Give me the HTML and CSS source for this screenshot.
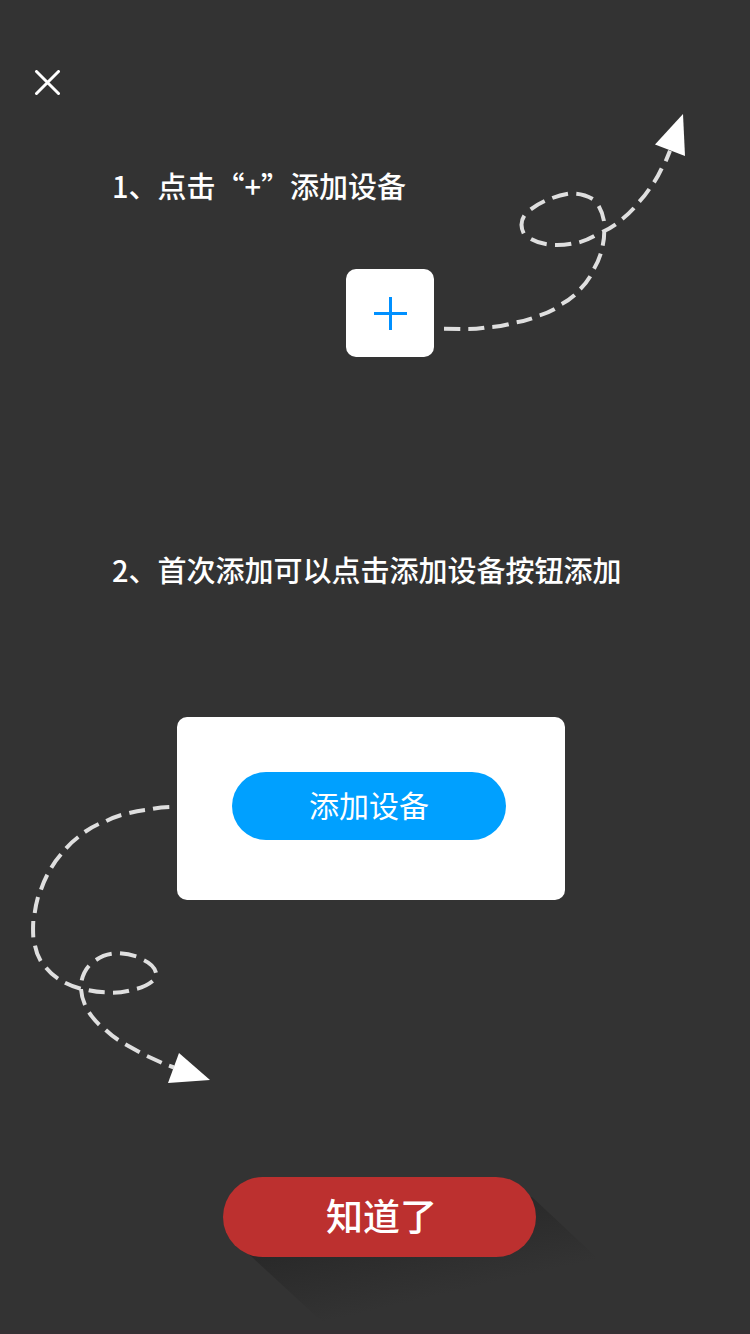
FILE: index.html
```html
<!DOCTYPE html>
<html lang="zh-CN">
<head>
<meta charset="utf-8">
<meta name="viewport" content="width=device-width, initial-scale=1">
<title>添加设备</title>
<link rel="stylesheet" href="styles.css">
</head>
<body>
<header class="top">
  <button class="close" type="button" aria-label="关闭">
    <svg class="close-icon" viewBox="0 0 26 26" aria-hidden="true"><path d="M2.500 1.500 24.500 23.500M24.500 1.500 2.500 23.500"/></svg>
  </button>
</header>
<main class="guide">
  <section class="step-one">
    <h2 class="title">1、点击“+”添加设备</h2>
    <button class="plus" type="button" aria-label="添加">
      <svg class="plus-icon" viewBox="0 0 33 33" aria-hidden="true"><path d="M0 16.5H33M16.5 0V33"/></svg>
    </button>
    <svg class="arrow-up" viewBox="0 0 242 218" aria-hidden="true">
      <path class="trail" d="M0 215.7L16.3 216M24.3 216Q32.3 216 40.3 214.7M48.3 214Q56.7 213.3 64.7 211.3M72.7 209.3Q80.5 207.9 88 205.3M95.7 202.3Q103.6 200 110.7 196M117.7 191Q124.8 187.3 130.7 182M136.3 176Q142.2 170.3 146.3 163.3M150 155.7Q154.3 148.6 156.7 140.7M158.7 132.7Q160.3 125.3 160.3 117.7M160 108Q158.5 99.5 154.7 93M148.7 86Q141 81.5 132.3 80.7M124 80.7Q116 82 108.3 85M100.7 88Q93.2 91.4 86.7 96.3M80.3 102.7Q75 111 79.7 120.3M87 126Q94 130 102.7 131.3M111 132Q119.2 132.2 127.3 130.7M135.3 129.3Q143.2 127 150.3 123M158.3 119Q165.4 115.8 171.7 111.3M178.3 106Q184.6 101 190 95M195.3 88.7Q200.8 82.8 205.3 76M210 69.3Q214.3 62.6 217.7 55.3M221.7 48.3L226 37.7"/>
      <path class="head" d="M239 1 211 31.5 241 43Z"/>
    </svg>
  </section>
  <section class="step-two">
    <h2 class="title title-two">2、首次添加可以点击添加设备按钮添加</h2>
    <div class="demo">
      <div class="card"><button class="add" type="button">添加设备</button></div>
      <svg class="arrow-down" viewBox="0 0 179 278" aria-hidden="true">
        <path class="trail" d="M138.3 2Q130 2.3 122 3.7M114 5Q106 6 98.3 8M90.3 10Q82.5 12.3 75.3 16M67.7 19Q60.3 22.3 53.7 27M47.3 32Q40.7 37 35 43.3M30 49.3Q24.6 55.5 20.3 62.7M16.3 69.7Q12.5 76.9 10 84.7M7 92Q4.8 99.8 3.7 108M2.3 116Q1.8 124 2.3 132.3M4 140.7Q5.5 149 9.7 156M15 162.7Q20.3 169.2 27 173.7M34 177.7Q41.5 181.5 49.7 183.7M57.7 185.3Q65.6 187 73.7 187.3M82 187.7Q90 187.6 98 185.7M106 183.7Q115 181.5 121.7 176M125 167.7Q123 160 113 155.3M105.3 151.3Q97.4 148.9 89 148.3M80.7 148.7Q72 150 65 155M58 160.7Q52.5 167 50.7 175.3M50 184Q50.5 192 54 200M58 207.3Q62.4 214.1 68.3 219.7M74.7 225Q80.6 230.6 87.3 235M94.3 239.3L108.7 247.3M116 251L130.7 257.7M138 260.7L143 262.5"/>
        <path class="head" d="M148 248 179 275 137 278Z"/>
      </svg>
    </div>
  </section>
</main>
<footer class="bottom">
  <div class="confirm-wrap">
    <button class="confirm" type="button">知道了</button>
  </div>
</footer>
</body>
</html>
```

FILE: styles.css
```css
* {
  box-sizing: border-box;
}

body {
  margin: 0;
  min-height: 100vh;
  border-bottom: 4px solid #362f33;
  background: #333;
  color: #fff;
  font-family: "Noto Sans CJK SC", "Noto Sans", sans-serif;
  overflow-x: hidden;
}

button {
  padding: 0;
  border: 0;
  font-family: inherit;
  color: #fff;
  cursor: pointer;
}

svg {
  display: block;
  fill: none;
}

.top {
  display: flex;
  padding: 60px 24px 0;
}

.close {
  display: grid;
  place-items: center;
  width: 46px;
  height: 46px;
  background: none;
}

.close-icon {
  width: 26px;
  height: 26px;
  stroke: #fff;
  stroke-width: 3;
  stroke-linecap: round;
}

.title {
  margin: 0;
  font-size: 29px;
  line-height: 40px;
  font-weight: 500;
}

.step-one {
  display: grid;
  grid-template-columns: minmax(0, 1fr) 242px;
  grid-template-rows: 96px 148px;
  column-gap: 10px;
  padding: 7px 64px 0 112px;
}

.step-one .title {
  align-self: end;
  margin-bottom: 4px;
}

.plus {
  grid-column: 1;
  grid-row: 2;
  justify-self: end;
  align-self: end;
  display: grid;
  place-items: center;
  width: 88px;
  height: 88px;
  border-radius: 10px;
  background: #fff;
}

.plus-icon {
  width: 33px;
  height: 33px;
  stroke: #0090ff;
  stroke-width: 3;
}

.arrow-up {
  grid-column: 2;
  grid-row: 1 / 3;
  width: 242px;
  height: 218px;
}

.trail {
  stroke: #dfdfdf;
  stroke-width: 4;
}

.head {
  fill: #fff;
}

.step-two {
  padding-top: 192px;
}

.title-two {
  padding-left: 112px;
}

.demo {
  display: grid;
  grid-template-columns: 146px minmax(0, 1fr);
  padding: 128px 185px 0 31px;
}

.card {
  grid-column: 2;
  grid-row: 1;
  align-self: start;
  padding: 55px 59px 60px 55px;
  border-radius: 10px;
  background: #fff;
}

.add {
  display: block;
  width: 100%;
  height: 68px;
  padding-bottom: 4px;
  border-radius: 34px;
  background: #00a0ff;
  font-size: 30px;
  line-height: 40px;
  font-weight: 400;
}

.arrow-down {
  grid-column: 1 / 3;
  grid-row: 1;
  width: 179px;
  height: 278px;
  margin-top: 88px;
}

.bottom {
  padding: 94px 214px 73px 223px;
}

.confirm-wrap {
  position: relative;
  z-index: 0;
}

.confirm-wrap::before {
  content: "";
  position: absolute;
  z-index: -1;
  top: 20px;
  left: 18px;
  right: -90px;
  height: 133px;
  background: linear-gradient(167deg, #282828 25%, #333 65%);
  clip-path: polygon(0 50px, 90px 100%, 100% 88px, calc(100% - 94px) 0);
}

.confirm {
  display: block;
  width: 100%;
  height: 80px;
  padding: 0 0 4px 4px;
  border-radius: 40px;
  background: #bc302f;
  font-size: 37px;
  line-height: 56px;
  font-weight: 500;
}
```
